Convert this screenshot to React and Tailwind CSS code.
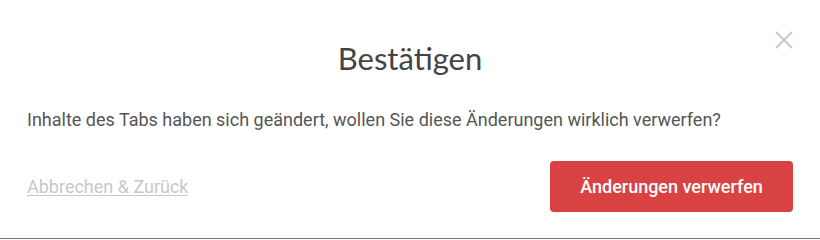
export default function App() {
  return (
    <div className="relative h-[239px] w-[820px] border-b border-[#777] bg-white px-[27px]" style={{ fontFamily: 'Roboto, "Open Sans", sans-serif' }}>
      {/* Close */}
      <button className="absolute right-[26px] top-[30px] text-[#c8c8c8]" aria-label="Schließen">
        <svg width="20" height="20" viewBox="0 0 20 20" fill="none" stroke="currentColor" strokeWidth="2">
          <path d="M2 2 L18 18 M18 2 L2 18" />
        </svg>
      </button>

      {/* Title */}
      <h2 className="pt-[39px] text-center text-[31px] leading-[38px] text-[#444]" style={{ fontFamily: 'Lato, "Open Sans", sans-serif' }}>
        Bestätigen
      </h2>

      {/* Body */}
      <p className="mt-[30px] text-[18px] leading-[26px] text-[#555]">
        Inhalte des Tabs haben sich geändert, wollen Sie diese Änderungen wirklich verwerfen?
      </p>

      {/* Footer */}
      <div className="mt-[28px] flex items-center justify-between">
        <a href="#" className="text-[18px] text-[#c8c8c8] underline underline-offset-2">
          Abbrechen &amp; Zurück
        </a>
        <button className="h-[51px] w-[243px] rounded bg-[#d94242] text-[18px] font-medium text-white">
          Änderungen verwerfen
        </button>
      </div>
    </div>
  )
}
